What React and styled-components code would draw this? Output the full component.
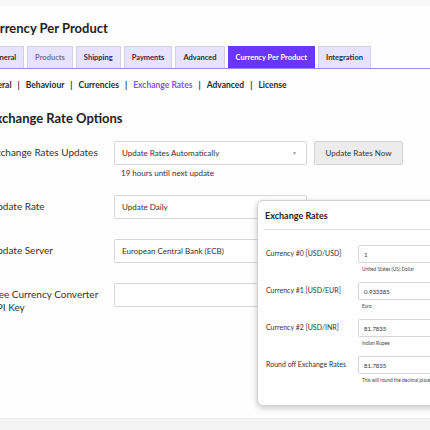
import React from "react";
import styled, { createGlobalStyle } from "styled-components";

const tabs = [
  "General",
  "Products",
  "Shipping",
  "Payments",
  "Advanced",
  "Currency Per Product",
  "Integration",
];

const subLinks = [
  "General",
  "Behaviour",
  "Currencies",
  "Exchange Rates",
  "Advanced",
  "License",
];

const rates = [
  { label: "Currency #0 [USD/USD]", value: "1", note: "United States (US) Dollar" },
  { label: "Currency #1 [USD/EUR]", value: "0.933385", note: "Euro" },
  { label: "Currency #2 [USD/INR]", value: "81.7835", note: "Indian Rupee" },
  {
    label: "Round off Exchange Rates",
    value: "81.7835",
    note: "This will round the decimal places of the exchange rates",
  },
];

const App = () => {
  return (
    <>
      <GlobalStyle />
      <Page>
        <TopStrip />
        <Main>
          <Title>Currency Per Product</Title>
          <TabBar>
            {tabs.map((t) => (
              <Tab
                key={t}
                $active={t === "Currency Per Product"}
                $muted={t === "Products"}
              >
                {t}
              </Tab>
            ))}
          </TabBar>
          <SubNav>
            {subLinks.map((s, i) => (
              <React.Fragment key={s}>
                {i > 0 && <Sep>|</Sep>}
                <SubLink $active={s === "Exchange Rates"}>{s}</SubLink>
              </React.Fragment>
            ))}
          </SubNav>

          <Section>
            <Heading>Exchange Rate Options</Heading>
            <Form>
              <Label>Exchange Rates Updates</Label>
              <Field>
                <Inline>
                  <Select>
                    Update Rates Automatically
                    <Caret>▼</Caret>
                  </Select>
                  <Button>Update Rates Now</Button>
                </Inline>
                <Help>19 hours until next update</Help>
              </Field>

              <Label>Update Rate</Label>
              <Field>
                <Select>Update Daily</Select>
              </Field>

              <Label>Update Server</Label>
              <Field>
                <Select>European Central Bank (ECB)</Select>
              </Field>

              <Label>
                Free Currency Converter
                <br />
                API Key
              </Label>
              <Field>
                <Select />
              </Field>
            </Form>
          </Section>
        </Main>
        <Footer />

        <Popup>
          <PopupHead>
            Exchange Rates
            <Toggle>▲</Toggle>
          </PopupHead>
          <PopupBody>
            {rates.map((r) => (
              <RateRow key={r.label}>
                <RateLabel>{r.label}</RateLabel>
                <RateField>
                  <RateInput>{r.value}</RateInput>
                  <RateNote>{r.note}</RateNote>
                </RateField>
              </RateRow>
            ))}
          </PopupBody>
        </Popup>
      </Page>
    </>
  );
};

export default App;

const GlobalStyle = createGlobalStyle`
  html, body {
    margin: 0;
    padding: 0;
    background: #ffffff;
  }
  body {
    font-family: Lato, "Noto Sans", "Liberation Sans", sans-serif;
    color: #2b2b2b;
    overflow: hidden;
  }
`;

const Page = styled.div`
  position: relative;
  width: 430px;
  height: 430px;
  overflow: hidden;
  display: flex;
  flex-direction: column;
  background: #fefefe;
`;

const TopStrip = styled.div`
  height: 6px;
  background: #f8f8f8;
  flex-shrink: 0;
`;

const Main = styled.div`
  flex: 1;
  margin-left: -18px;
  padding-top: 13px;
`;

const Title = styled.h1`
  margin: 0 0 0 2px;
  font-size: 13px;
  line-height: 18px;
  font-weight: 700;
  color: #222;
`;

const TabBar = styled.div`
  display: flex;
  gap: 3px;
  margin-top: 9px;
  height: 22px;
  border-bottom: 1.5px solid #9d88f8;
  width: 470px;
`;

const Tab = styled.div`
  display: flex;
  align-items: center;
  padding: 0 7px;
  font-size: 7.5px;
  font-weight: 700;
  color: ${(p) => (p.$active ? "#ffffff" : p.$muted ? "#77738a" : "#2f2d3a")};
  background: ${(p) => (p.$active ? "#6a36fb" : "#e7e2fd")};
  border: 1px solid ${(p) => (p.$active ? "#6a36fb" : "#d4d0de")};
  border-bottom: none;
  border-radius: 1px 1px 0 0;
  white-space: nowrap;
`;

const SubNav = styled.div`
  display: flex;
  align-items: center;
  gap: 6px;
  margin-top: 10px;
  font-size: 8.5px;
  font-weight: 700;
  line-height: 12px;
  color: #2b2b2b;
`;

const Sep = styled.span`
  color: #2b2b2b;
  font-weight: 700;
`;

const SubLink = styled.span`
  color: ${(p) => (p.$active ? "#7b58f6" : "#2b2b2b")};
`;

const Section = styled.div`
  margin-left: 8px;
`;

const Heading = styled.h2`
  margin: 18px 0 0 -2px;
  font-size: 13px;
  line-height: 18px;
  font-weight: 700;
  color: #222;
`;

const Form = styled.div`
  display: grid;
  grid-template-columns: 124px 1fr;
  row-gap: 20px;
  margin-top: 14px;
`;

const Label = styled.div`
  font-size: 10px;
  line-height: 13px;
  color: #333;
  padding-top: 5px;
  white-space: nowrap;
`;

const Field = styled.div`
  display: flex;
  flex-direction: column;
`;

const Inline = styled.div`
  display: flex;
  gap: 7px;
`;

const Select = styled.div`
  box-sizing: border-box;
  width: 193px;
  height: 24px;
  border: 1px solid #d6d6d6;
  border-radius: 2px;
  background: #fff;
  display: flex;
  align-items: center;
  padding: 0 7px;
  font-size: 8px;
  color: #333;
`;

const Caret = styled.span`
  margin-left: auto;
  font-size: 5px;
  color: #999;
  margin-right: 2px;
`;

const Button = styled.div`
  box-sizing: border-box;
  width: 89px;
  height: 24px;
  display: flex;
  align-items: center;
  justify-content: center;
  background: #ececec;
  border: 1px solid #d3d3d3;
  border-radius: 2px;
  font-size: 8px;
  color: #333;
`;

const Help = styled.div`
  margin: 3px 0 -3px;
  padding-left: 7px;
  font-size: 8px;
  line-height: 10px;
  color: #333;
`;

const Footer = styled.div`
  height: 11px;
  flex-shrink: 0;
  background: #f3f3f3;
  border-top: 1px solid #ededed;
`;

const Popup = styled.div`
  position: absolute;
  left: 257px;
  top: 200px;
  width: 200px;
  height: 206px;
  box-sizing: border-box;
  background: #fff;
  border: 1px solid #d0d0d0;
  border-radius: 6px;
  box-shadow: 0 2px 6px rgba(0, 0, 0, 0.22);
  padding: 0 6px;
`;

const PopupHead = styled.div`
  height: 28px;
  display: flex;
  align-items: center;
  padding-left: 1px;
  padding-right: 10px;
  border-bottom: 1px solid #e2e2e2;
  font-size: 9px;
  font-weight: 700;
  color: #222;
`;

const Toggle = styled.span`
  margin-left: auto;
  font-size: 5px;
  color: #999;
`;

const PopupBody = styled.div`
  display: flex;
  flex-direction: column;
  gap: 10px;
  padding-top: 15px;
  padding-left: 2px;
`;

const RateRow = styled.div`
  display: grid;
  grid-template-columns: 92px 1fr;
`;

const RateLabel = styled.div`
  font-size: 7px;
  line-height: 9px;
  color: #333;
  padding-top: 4px;
`;

const RateField = styled.div`
  display: flex;
  flex-direction: column;
`;

const RateInput = styled.div`
  box-sizing: border-box;
  height: 18px;
  width: 120px;
  border: 1px solid #d6d6d6;
  border-radius: 2px;
  display: flex;
  align-items: center;
  padding: 0 5px;
  font-size: 6px;
  color: #333;
`;

const RateNote = styled.div`
  margin-top: 3px;
  padding-left: 4px;
  font-size: 4.8px;
  line-height: 6px;
  color: #444;
  white-space: nowrap;
`;
